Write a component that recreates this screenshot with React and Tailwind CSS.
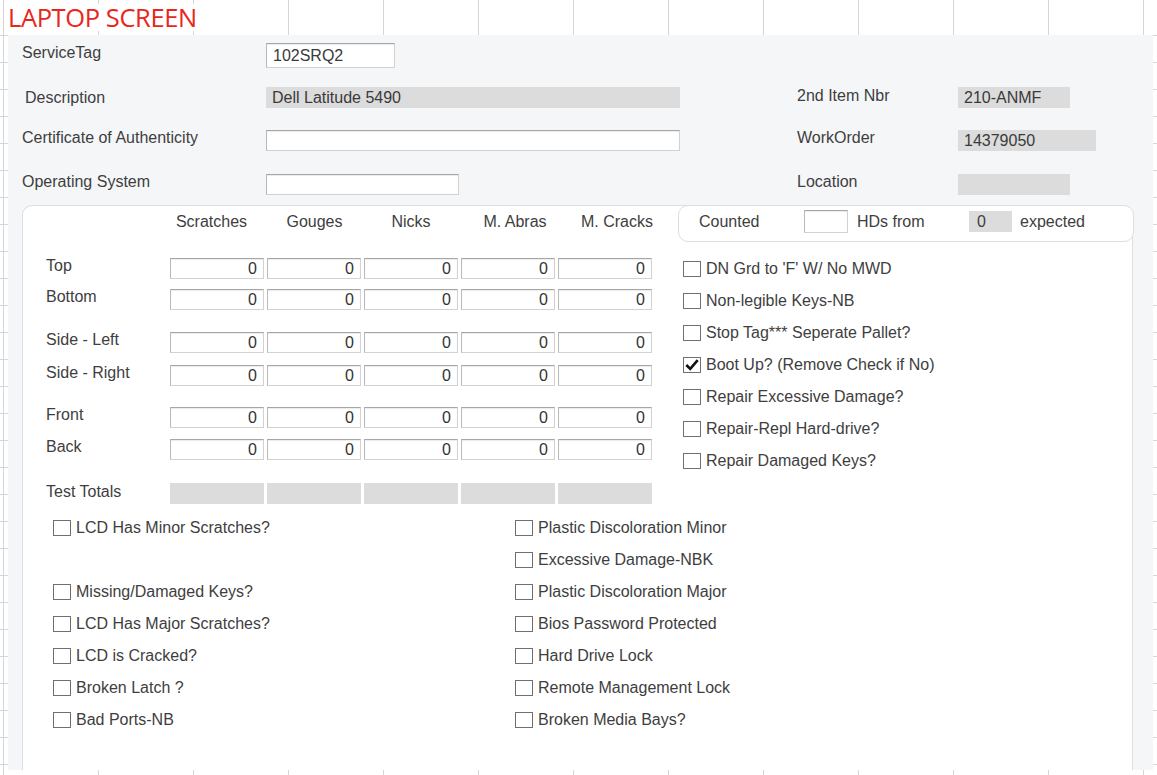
import React from 'react';

// sheet grid colour + form text colour
const GRID = 'bg-[linear-gradient(to_right,#d6d6d6_1px,transparent_1px),linear-gradient(to_bottom,#d6d6d6_1px,transparent_1px)] bg-[size:95px_27px] bg-[position:3px_0px]';

const inputCls = 'bg-white border border-[#d2d2d2] border-t-[#a6a6a6] border-l-[#bababa] shadow-[inset_0_1px_1px_rgba(0,0,0,0.08)]';

const Field = ({ w, h = 'h-[21px]', value, gray }) => (
  <div
    className={`${w} ${h} flex items-center pl-[6px] text-[#3a3a3a] ${gray ? 'bg-[#dcdcdc]' : inputCls}`}
  >
    {value}
  </div>
);

const Check = ({ label, checked }) => (
  <div className="flex items-center gap-[5px] h-[32px]">
    <span className="w-[18px] h-[16px] border border-[#707070] bg-white flex items-center justify-center">
      {checked && (
        <svg viewBox="0 0 18 16" className="w-[16px] h-[14px]">
          <path d="M2.5 8 L7 12.5 L15.5 2.5" fill="none" stroke="#111" strokeWidth="3" />
        </svg>
      )}
    </span>
    <span>{label}</span>
  </div>
);

const rows = [
  { label: 'Top', mt: 'mt-[20px]' },
  { label: 'Bottom', mt: 'mt-[10px]' },
  { label: 'Side - Left', mt: 'mt-[22px]' },
  { label: 'Side - Right', mt: 'mt-[12px]' },
  { label: 'Front', mt: 'mt-[21px]' },
  { label: 'Back', mt: 'mt-[11px]' },
];

const sideChecks = [
  { label: "DN Grd to 'F' W/ No MWD" },
  { label: 'Non-legible Keys-NB' },
  { label: 'Stop Tag*** Seperate Pallet?' },
  { label: 'Boot Up? (Remove Check if No)', checked: true },
  { label: 'Repair Excessive Damage?' },
  { label: 'Repair-Repl Hard-drive?' },
  { label: 'Repair Damaged Keys?' },
];

const leftChecks = [
  'LCD Has Minor Scratches?',
  null,
  'Missing/Damaged Keys?',
  'LCD Has Major Scratches?',
  'LCD is Cracked?',
  'Broken Latch ?',
  'Bad Ports-NB',
];

const rightChecks = [
  'Plastic Discoloration Minor',
  'Excessive Damage-NBK',
  'Plastic Discoloration Major',
  'Bios Password Protected',
  'Hard Drive Lock',
  'Remote Management Lock',
  'Broken Media Bays?',
];

const NumCell = () => (
  <div className={`h-[21px] flex items-center justify-end pr-[6px] text-[#333] ${inputCls}`}>0</div>
);

export default function App() {
  return (
    <div className="w-[1157px] h-[775px] overflow-hidden bg-white font-['Liberation_Sans',Arial,sans-serif] text-[16px] text-[#3e3e3e] leading-none">
      {/* top sheet row with title */}
      <div className="h-[35px] flex items-center pl-[8px] bg-[linear-gradient(to_right,#d6d6d6_1px,transparent_1px)] bg-[size:95px_100%] bg-[position:3px_0px]">
        <h1 className="font-['Open_Sans',sans-serif] font-medium text-[25.5px] text-[#e8271c] tracking-[-0.4px] bg-white pr-[4px] pt-[1px]">LAPTOP SCREEN</h1>
      </div>

      <div className={`h-[740px] flex ${GRID}`}>
        <div className="w-[8px] shrink-0" />
        <div className="w-[1145px] h-[735px] bg-[#f5f6f8] flex flex-col">
          {/* header fields */}
          <div className="grid grid-cols-[258px_531px_161px_auto] items-center pt-[8px]">
            <div className="h-[25px] flex items-center pl-[14px] pb-[5px]">ServiceTag</div>
            <Field w="w-[129px]" h="h-[25px]" value="102SRQ2" />
            <div />
            <div />

            <div className="mt-[19px] h-[21px] flex items-center pl-[17px]">Description</div>
            <div className="mt-[19px]"><Field w="w-[414px]" value="Dell Latitude 5490" gray /></div>
            <div className="mt-[19px] h-[21px] flex items-center pb-[3px]">2nd Item Nbr</div>
            <div className="mt-[19px]"><Field w="w-[112px]" value="210-ANMF" gray /></div>

            <div className="mt-[22px] h-[21px] flex items-center pl-[14px] pb-[5px]">Certificate of Authenticity</div>
            <div className="mt-[22px]"><Field w="w-[414px]" /></div>
            <div className="mt-[22px] h-[21px] flex items-center pb-[5px]">WorkOrder</div>
            <div className="mt-[22px]"><Field w="w-[138px]" value="14379050" gray /></div>

            <div className="mt-[23px] h-[21px] flex items-center pl-[14px] pb-[5px]">Operating System</div>
            <div className="mt-[23px]"><Field w="w-[193px]" /></div>
            <div className="mt-[23px] h-[21px] flex items-center pb-[5px]">Location</div>
            <div className="mt-[23px]"><Field w="w-[112px]" gray /></div>
          </div>

          {/* inspection box */}
          <div className="ml-[14px] mt-[10px] w-[1111px] flex-1 bg-white border border-b-0 border-[#dbdee2] rounded-tl-[10px] rounded-tr-[10px]">
            <div className="flex items-start">
              <div className="w-[655px]">
                <div className="h-[32px] grid grid-cols-[144px_repeat(5,94px)] gap-x-[3px] items-center whitespace-nowrap">
                  <div />
                  <div className="text-center pr-[11px]">Scratches</div>
                  <div className="text-center pl-[1px]">Gouges</div>
                  <div className="text-center">Nicks</div>
                  <div className="text-center pl-[14px]">M. Abras</div>
                  <div className="text-center pl-[14px] -mr-[10px]">M. Cracks</div>
                </div>
                {rows.map((r) => (
                  <div key={r.label} className={`${r.mt} grid grid-cols-[144px_repeat(5,94px)] gap-x-[3px] items-center`}>
                    <div className="pl-[23px] pb-[5px]">{r.label}</div>
                    <NumCell />
                    <NumCell />
                    <NumCell />
                    <NumCell />
                    <NumCell />
                  </div>
                ))}
                <div className="mt-[23px] grid grid-cols-[144px_repeat(5,94px)] gap-x-[3px] items-center">
                  <div className="pl-[23px] pb-[4px]">Test Totals</div>
                  {[0, 1, 2, 3, 4].map((i) => (
                    <div key={i} className="h-[21px] bg-[#dcdcdc]" />
                  ))}
                </div>
              </div>

              <div className="flex-1">
                <div className="-mt-px -mr-[2px] h-[37px] flex items-center pl-[20px] pb-[4px] bg-white border border-[#dbdee2] rounded-[10px]">
                  <span className="w-[105px]">Counted</span>
                  <div className={`w-[44px] h-[23px] ${inputCls}`} />
                  <span className="ml-[9px] w-[112px]">HDs from</span>
                  <div className="w-[43px] h-[21px] bg-[#dcdcdc] flex items-center pl-[8px]">0</div>
                  <span className="ml-[8px]">expected</span>
                </div>
                <div className="mt-[11px] pl-[5px]">
                  {sideChecks.map((c) => (
                    <Check key={c.label} label={c.label} checked={c.checked} />
                  ))}
                </div>
              </div>
            </div>

            {/* bottom checkboxes */}
            <div className="mt-[8px] flex">
              <div className="w-[492px] pl-[30px]">
                {leftChecks.map((c, i) =>
                  c ? <Check key={c} label={c} /> : <div key={i} className="h-[32px]" />
                )}
              </div>
              <div>
                {rightChecks.map((c) => (
                  <Check key={c} label={c} />
                ))}
              </div>
            </div>
          </div>
        </div>
      </div>
    </div>
  );
}
